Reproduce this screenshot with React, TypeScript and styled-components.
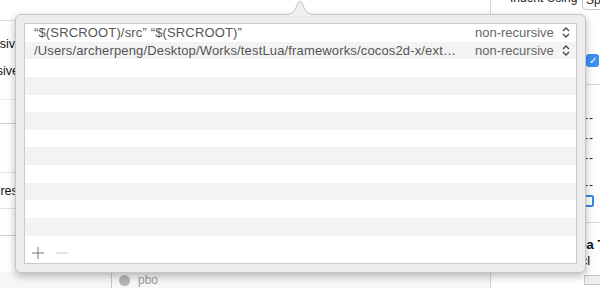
import React from "react";
import styled, { createGlobalStyle } from "styled-components";

const Global = createGlobalStyle`
  html, body { margin: 0; padding: 0; }
  body { width: 600px; height: 288px; overflow: hidden; background: #ffffff; font-family: "Liberation Sans", Arial, sans-serif; }
  #root { width: 600px; height: 288px; }
`;

const Screen = styled.div`
  position: relative;
  width: 600px;
  height: 288px;
  display: flex;
  overflow: hidden;
`;

const LeftPane = styled.div`
  width: 490px;
  flex-shrink: 0;
  display: flex;
  flex-direction: column;
  background: #ffffff;
`;

const LeftRow = styled.div<{ $h: number; $line?: string; $top?: number }>`
  height: ${(p) => p.$h}px;
  margin-top: ${(p) => p.$top || 0}px;
  flex-shrink: 0;
  display: flex;
  align-items: center;
  border-bottom: 1px solid ${(p) => p.$line || "transparent"};
  box-sizing: border-box;
`;

const CutLabel = styled.span<{ $w: number }>`
  width: ${(p) => p.$w}px;
  text-align: right;
  white-space: nowrap;
  direction: rtl;
  overflow: hidden;
  font-size: 12.5px;
  color: #111;
`;

const LeftFooter = styled.div`
  flex: 1;
  display: flex;
  align-items: flex-end;
`;

const FooterBar = styled.div`
  height: 16px;
  width: 100%;
  display: flex;
  align-items: center;
  background: #f7f7f7;
`;

const FooterSep = styled.div`
  width: 1px;
  height: 16px;
  margin-left: 111px;
  background: #c8c8c8;
`;

const FooterIcon = styled.div`
  width: 11px;
  height: 11px;
  margin-left: 7px;
  border-radius: 50%;
  background: #b5b5b5;
`;

const FooterText = styled.span`
  margin-left: 8px;
  font-size: 12px;
  color: #9a9a9a;
`;

const RightPane = styled.div`
  flex: 1;
  min-width: 0;
  overflow: hidden;
  border-left: 1px solid #d4d4d4;
  display: flex;
  flex-direction: column;
  background: #ffffff;
`;

const IndentRow = styled.div`
  height: 30px;
  flex-shrink: 0;
  display: flex;
  align-items: flex-start;
  margin-top: -9px;
  padding-left: 19px;
  gap: 8px;
  white-space: nowrap;
`;

const IndentLabel = styled.span`
  width: 64px;
  flex-shrink: 0;
  font-size: 12px;
  color: #222;
  line-height: 14px;
`;

const PopupBtn = styled.div`
  width: 40px;
  height: 19px;
  flex-shrink: 0;
  border: 1px solid #c4c4c4;
  border-radius: 4px;
  font-size: 12px;
  padding-left: 3px;
  box-sizing: border-box;
  color: #222;
  line-height: 17px;
  background: #fff;
`;

const CheckRow = styled.div`
  height: 64px;
  flex-shrink: 0;
  display: flex;
  align-items: flex-start;
  padding: 33px 0 0 95px;
  border-bottom: 1px solid #d6d6d6;
  box-sizing: border-box;
`;

const CheckBox = styled.div`
  width: 13px;
  height: 13px;
  flex-shrink: 0;
  border-radius: 3px;
  background: #3d8ff5;
  color: white;
  font-size: 10px;
  display: flex;
  align-items: center;
  justify-content: center;
`;

const DashRow = styled.div<{ $h: number; $top?: number }>`
  height: ${(p) => p.$h}px;
  margin-top: ${(p) => p.$top || 0}px;
  flex-shrink: 0;
  display: flex;
  align-items: center;
  padding-left: 93px;
  font-size: 12px;
  color: #333;
  letter-spacing: 1px;
  white-space: nowrap;
`;

const BlueIconRow = styled.div`
  height: 29px;
  flex-shrink: 0;
  display: flex;
  align-items: flex-start;
  padding: 1px 0 0 93px;
  border-bottom: 1px solid #d6d6d6;
  box-sizing: border-box;
`;

const BlueIcon = styled.div`
  width: 6px;
  height: 8px;
  flex-shrink: 0;
  border: 2px solid #3b86f0;
  border-radius: 2px;
`;

const InfoBlock = styled.div`
  flex: 1;
  padding: 14px 0 0 79px;
  background: #ffffff;
  display: flex;
  flex-direction: column;
  font-size: 13px;
  line-height: 16px;
  white-space: nowrap;
`;

const BoldLine = styled.span`
  font-weight: bold;
  color: #111;
`;

const PlainLine = styled.span`
  color: #111;
`;

const SmallBox = styled.div`
  margin: 6px 0 0 14px;
  width: 34px;
  height: 8px;
  border: 1px solid #c8c8c8;
  background: #eeeeee;
`;

const Popover = styled.div`
  position: absolute;
  left: 15px;
  top: 14px;
  width: 571px;
  height: 259px;
  box-sizing: border-box;
  border: 1px solid #c4c4c4;
  border-radius: 6px;
  background: #ededed;
  box-shadow: 0 3px 9px rgba(0, 0, 0, 0.28);
  padding: 8px;
  display: flex;
`;

const Arrow = styled.svg`
  position: absolute;
  left: 263px;
  top: -15px;
  width: 42px;
  height: 16px;
`;

const Table = styled.div`
  flex: 1;
  min-width: 0;
  border: 1px solid #cbcbcb;
  background: #ffffff;
  display: flex;
  flex-direction: column;
`;

const Row = styled.div<{ $alt: boolean }>`
  height: 17.65px;
  flex-shrink: 0;
  display: flex;
  align-items: center;
  background: ${(p) => (p.$alt ? "#f3f3f3" : "#ffffff")};
  padding-left: 9px;
  padding-right: 6px;
  font-size: 13px;
  color: #555;
`;

const PathText = styled.span`
  flex: 1;
  min-width: 0;
  margin-right: 12px;
  white-space: nowrap;
  overflow: hidden;
  text-overflow: ellipsis;
  letter-spacing: 0.15px;
`;

const Mode = styled.span`
  width: 80px;
  flex-shrink: 0;
  color: #666;
  white-space: nowrap;
`;

const Stepper = styled.svg`
  width: 8px;
  height: 11px;
  flex-shrink: 0;
  margin-left: 7px;
`;

const BottomBar = styled.div`
  flex: 1;
  display: flex;
  align-items: flex-end;
  padding: 0 0 4px 7px;
  gap: 12px;
`;

const IconBtn = styled.svg`
  width: 12px;
  height: 12px;
`;

const rows = [
  { path: "“$(SRCROOT)/src” “$(SRCROOT)”", mode: "non-recursive" },
  {
    path: "/Users/archerpeng/Desktop/Works/testLua/frameworks/cocos2d-x/ext…",
    mode: "non-recursive",
  },
];

export default function App() {
  const all = Array.from({ length: 12 }, (_, i) => rows[i] || null);
  return (
    <>
      <Global />
      <Screen>
        <LeftPane>
          <LeftRow $h={21} $line="#dcdcdc" />
          <LeftRow $h={18} $top={14}>
            <CutLabel $w={22}>recursive</CutLabel>
          </LeftRow>
          <LeftRow $h={18} $top={9}>
            <CutLabel $w={19}>recursive</CutLabel>
          </LeftRow>
          <LeftRow $h={20} $line="#ececec" />
          <LeftRow $h={24} $line="#cfcfcf" />
          <LeftRow $h={49} $line="#e4e4e4" />
          <LeftRow $h={36} $line="#e4e4e4">
            <CutLabel $w={24}>Address</CutLabel>
          </LeftRow>
          <LeftRow $h={27} $line="#cfcfcf" />
          <LeftFooter>
            <FooterBar>
              <FooterSep />
              <FooterIcon />
              <FooterText>pbo</FooterText>
            </FooterBar>
          </LeftFooter>
        </LeftPane>
        <RightPane>
          <IndentRow>
            <IndentLabel>Indent Using</IndentLabel>
            <PopupBtn>Spaces</PopupBtn>
          </IndentRow>
          <CheckRow>
            <CheckBox>✓</CheckBox>
          </CheckRow>
          <DashRow $h={20} $top={23}>--</DashRow>
          <DashRow $h={20}>--</DashRow>
          <DashRow $h={20}>--</DashRow>
          <DashRow $h={18} $top={8}>--</DashRow>
          <BlueIconRow>
            <BlueIcon />
          </BlueIconRow>
          <InfoBlock>
            <BoldLine>Spa Te</BoldLine>
            <PlainLine>Incl</PlainLine>
            <SmallBox />
          </InfoBlock>
        </RightPane>

        <Popover>
          <Arrow viewBox="0 0 42 16">
            <path
              d="M0 15.5 C9 15.5 13 14 16 10 L19.3 2 Q21 0 22.7 2 L26 10 C29 14 33 15.5 42 15.5 Z"
              fill="#f0f0f0"
              stroke="#c4c4c4"
              strokeWidth="1"
            />
            <rect x="0" y="15" width="42" height="2" fill="#ededed" />
          </Arrow>
          <Table>
            {all.map((r, i) => (
              <Row key={i} $alt={i % 2 === 1}>
                {r && (
                  <>
                    <PathText>{r.path}</PathText>
                    <Mode>{r.mode}</Mode>
                    <Stepper viewBox="0 0 8 11">
                      <path
                        d="M1 4 L4 1 L7 4 M1 7 L4 10 L7 7"
                        fill="none"
                        stroke="#444"
                        strokeWidth="1.3"
                      />
                    </Stepper>
                  </>
                )}
              </Row>
            ))}
            <BottomBar>
              <IconBtn viewBox="0 0 12 12">
                <path d="M6 0 V12 M0 6 H12" stroke="#777" strokeWidth="1" />
              </IconBtn>
              <IconBtn viewBox="0 0 12 12">
                <path d="M0 6 H12" stroke="#c8c8c8" strokeWidth="1" />
              </IconBtn>
            </BottomBar>
          </Table>
        </Popover>
      </Screen>
    </>
  );
}
